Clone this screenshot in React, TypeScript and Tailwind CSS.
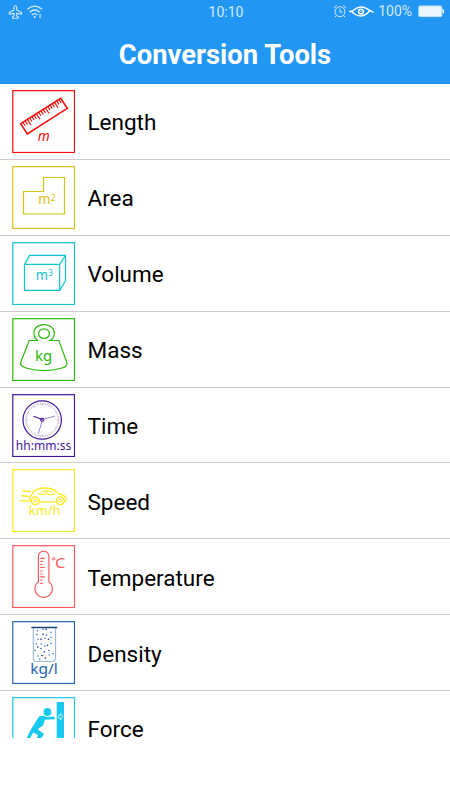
import type { ReactNode } from "react";

interface Tool {
  name: string;
  color: string;
  art: ReactNode;
}

const textProps = {
  fill: "currentColor",
  stroke: "none",
  fontFamily: '"Noto Sans", "Open Sans", sans-serif',
  lengthAdjust: "spacingAndGlyphs",
};

function Ruler() {
  const ticks = Array.from({ length: 17 }, (_, i) => i);
  return (
    <>
      <path d="M8.7 33.7 48.7 8.3 55.3 18.3 15.3 44Z" strokeWidth="1.5" />
      {ticks.map((i) => {
        const x = 10.9 + i * 2.25;
        const y = 32.3 - i * 1.43;
        const len = i % 4 === 2 ? 6.5 : 4.2;
        return <path key={i} d={`M${x} ${y}l${len * 0.55} ${len * 0.83}`} strokeWidth="1.1" />;
      })}
      <text {...textProps} x="25.8" y="51" fontSize="13.5" fontStyle="italic" textLength="12">
        m
      </text>
    </>
  );
}

function Clock() {
  const marks = Array.from({ length: 60 }, (_, i) => (i * Math.PI) / 30);
  return (
    <>
      <circle cx="30.2" cy="26" r="19.2" strokeWidth="1.2" />
      {marks.map((a, i) => {
        const inner = i % 5 === 0 ? 14.5 : 15.5;
        return (
          <path
            key={i}
            d={`M${30.2 + Math.cos(a) * inner} ${26 + Math.sin(a) * inner}L${30.2 + Math.cos(a) * 17} ${26 + Math.sin(a) * 17}`}
            strokeWidth="0.5"
            opacity="0.7"
          />
        );
      })}
      <path d="M30.2 25.5 21.5 22.3" strokeWidth="1.2" />
      <path d="M30.2 25.5 43 22M31 24 26.3 39.7" strokeWidth="0.7" opacity="0.75" />
      <circle cx="30.2" cy="25.8" r="1.7" />
      <text {...textProps} x="3.8" y="56.4" fontSize="12.5" textLength="55.4">
        hh:mm:ss
      </text>
    </>
  );
}

const bubbles = [
  [31, 8.3], [34, 8.3], [25.3, 9.7], [39, 11.3], [31, 13.3], [34.5, 14.2],
  [25, 13.5], [29, 18.2], [26, 18.2], [33, 17.3], [36.5, 18.3], [24.3, 23],
  [29.2, 23], [35.5, 24.3], [39, 22.5], [29, 27.5], [25.8, 26], [33, 25],
  [23, 29.5], [32.3, 30.8], [36.8, 29.5], [41, 32.8], [30, 34.5], [26.2, 35],
  [37.3, 34], [33.3, 37], [27.7, 38], [39, 16.5],
];

const tools: Tool[] = [
  { name: "Length", color: "text-[#f90808]", art: <Ruler /> },
  {
    name: "Area",
    color: "text-[#d6c218]",
    art: (
      <>
        <path d="M11.5 25.5H31.5V11.5H52.5V48H11.5Z" strokeWidth="1.2" />
        <text {...textProps} x="26.2" y="38.3" fontSize="13.5" textLength="12.2">
          m
        </text>
        <text {...textProps} x="38.8" y="34.7" fontSize="8.5">
          2
        </text>
      </>
    ),
  },
  {
    name: "Volume",
    color: "text-[#0fc2cf]",
    art: (
      <>
        <path d="M12.5 22.4H47.7V48.4H12.5ZM12.5 22.4 17.5 13.4H53.5L47.7 22.4M53.5 13.4V38.7L47.7 48.4" strokeWidth="1.2" />
        <text {...textProps} x="23.8" y="38.2" fontSize="13.5" textLength="12.2">
          m
        </text>
        <text {...textProps} x="36" y="34.2" fontSize="8.5">
          3
        </text>
      </>
    ),
  },
  {
    name: "Mass",
    color: "text-[#2bb907]",
    art: (
      <>
        <ellipse cx="32" cy="15.6" rx="5.5" ry="4.7" strokeWidth="1.2" />
        <path d="M26 22.5C20.5 19 20.4 10.7 26.5 7.9 35 4 43 9.5 42.3 16.3 42 19.2 40 21.3 38 22.5H46.8L54.7 44C56 47 53.5 49 50 50 39 53.2 25 53.2 14 50 9.5 48.7 7.7 46.5 9 43.5L17.2 22.5H26" strokeWidth="1.2" />
        <text {...textProps} x="23" y="43" fontSize="14.5" textLength="17.2">
          kg
        </text>
      </>
    ),
  },
  { name: "Time", color: "text-[#42149b]", art: <Clock /> },
  {
    name: "Speed",
    color: "text-[#f8ea20]",
    art: (
      <>
        <path d="M18.8 32.6C17.2 31.6 17.2 27.6 19.3 26 20.5 23.4 22.3 21.4 25 20.3 30 18.7 36 18.7 40.5 20.3 43.3 21.7 45.5 23.6 47.2 25 51.5 25.6 53.5 26.6 54 29.5 54.2 31 54 32.2 52.8 32.6" strokeWidth="1.3" />
        <path d="M27.6 33H44" strokeWidth="1.3" />
        <path d="M26.5 25.4Q28.3 21.9 33.3 21.6V25.4ZM35 21.6Q40 21.7 43 25.4H35Z" strokeWidth="0.9" />
        <circle cx="23.2" cy="31.8" r="3.8" strokeWidth="1.4" />
        <circle cx="23.2" cy="31.8" r="1.5" />
        <circle cx="48.3" cy="31.8" r="3.8" strokeWidth="1.4" />
        <circle cx="48.3" cy="31.8" r="1.5" />
        <path d="M10.5 21.7 18.3 22.8M9 26.7 16.5 27.3M7.5 31.9 16.5 32" strokeWidth="1.4" />
        <text {...textProps} x="16.8" y="46.3" fontSize="13" textLength="31.6">
          km/h
        </text>
      </>
    ),
  },
  {
    name: "Temperature",
    color: "text-[#fb5860]",
    art: (
      <>
        <path d="M26.4 36.8V11.4A5.2 5.2 0 0 1 36.9 11.4V36.8A8.7 8.7 0 1 1 26.4 36.8Z" strokeWidth="1.2" />
        <path d="M28.3 13.3h4.5M28.3 16.4h2.5M28.3 19.5h2.5M28.3 22.5h4.5M28.3 26h2.5M28.3 29h2.5M28.3 31.8h4.5M28.3 35h2.5M28.3 38.3h2.5" strokeWidth="1.2" />
        <circle cx="41.7" cy="13.8" r="1.2" />
        <text {...textProps} x="43.1" y="22.8" fontSize="15" textLength="10.4">
          C
        </text>
      </>
    ),
  },
  {
    name: "Density",
    color: "text-[#2465b0]",
    art: (
      <>
        <path d="M21.3 7V37.5Q21.3 40.4 24.3 40.4H40.7Q43.6 40.4 43.6 37.5V7" opacity="0.5" />
        <path d="M19.3 6.5H45.2" stroke="#154474" strokeWidth="1.5" />
        {bubbles.map(([x, y], i) => (
          <circle key={i} cx={x} cy={y} r="0.8" fill={i % 3 === 1 ? "#111c80" : "#3275be"} stroke="none" />
        ))}
        <text {...textProps} x="18.3" y="53" fontSize="15" textLength="27.5">
          kg/l
        </text>
      </>
    ),
  },
  {
    name: "Force",
    color: "text-[#18c9ee]",
    art: (
      <>
        <path d="M44.7 5H52V63H44.7Z" fill="currentColor" stroke="none" />
        <path d="M46.3 18.3h2v-2l2.6 3.4-2.6 3.3v-2h-2Z" stroke="#fff" strokeWidth="0.7" />
        <circle cx="35.4" cy="15" r="3.9" fill="currentColor" stroke="none" />
        <path d="M27 19.5 31 18.6 34 19.8 42.8 19.8V22.2L33 22.8 31 28.5 25.5 32.2 32 37 27.8 44H23.8L26 38 21 35.5 17 44H13L20 30.5Z" fill="currentColor" stroke="none" />
      </>
    ),
  },
];

function StatusBar() {
  return (
    <div className="flex h-6 items-center justify-between pl-2 pr-[6px] text-[#d3eafe]">
      <div className="flex w-[150px] items-center gap-[4px]">
        <svg width="15" height="15" viewBox="0 0 15 15" fill="none" stroke="currentColor" strokeWidth="1.1" strokeLinejoin="round">
          <path d="M7.3 .8Q6 .8 6 2.6V5L1.2 7.6V9.2L6 8.4V10.9L4.6 12V13.2H10.2V12L8.7 10.9V8.4L13.5 9.2V7.6L8.7 5V2.6Q8.7 .8 7.3 .8Z" />
        </svg>
        <svg width="17" height="15" viewBox="0 0 17 15" fill="none" stroke="currentColor" strokeWidth="1.3">
          <path d="M.4 4.2Q7.7-1.8 15 4.2M2.7 7.2Q7.7 2.8 12.7 7.2M4.9 10Q7.7 7.3 10.5 10" />
          <circle cx="7.7" cy="12" r="1.1" fill="currentColor" stroke="none" />
          <path d="M12.2 9.8H14.2M12.2 12.2H14.2" />
        </svg>
      </div>
      <span className="text-[14px] leading-none">10:10</span>
      <div className="flex w-[150px] items-center justify-end">
        <svg width="14" height="14" viewBox="0 0 14 14" fill="none" stroke="currentColor" strokeWidth="1">
          <circle cx="7" cy="6.7" r="5" />
          <path d="M7 3.5V7H9.7M1.2 3.3Q1.6 1.1 3.8 .7M10.2 .7Q12.4 1.1 12.8 3.3M3.2 10.7 2 12.2M10.8 10.7 12 12.2" />
        </svg>
        <svg className="ml-[2px]" width="25" height="14" viewBox="0 0 25 14" fill="none" stroke="#fff" strokeWidth="1.4">
          <path d="M0 6.3Q2.5 6.8 4 5.6 12-1.7 20.5 5.4L24.5 7.3M2.5 6.6Q12 15.8 21 5.8" />
          <circle cx="12" cy="6.6" r="2.4" />
          <circle cx="12" cy="6.6" r=".6" fill="#fff" stroke="none" />
        </svg>
        <span className="-mt-[2px] ml-[4px] text-[14px] leading-none">100%</span>
        <svg className="-mt-px ml-[6px]" width="26" height="13" viewBox="0 0 26 13">
          <rect x=".8" y="1" width="23" height="10.6" rx="1" fill="#ecf6ff" stroke="#bfe0fc" />
          <path d="M24.4 4.3H26V8.3H24.4Z" fill="#e2f1ff" />
        </svg>
      </div>
    </div>
  );
}

export default function App() {
  return (
    <div className="h-[800px] w-[450px] overflow-hidden bg-white font-[Roboto,sans-serif]">
      <header className="h-[84px] border-b border-[#168ae9] bg-[#2196f3]">
        <StatusBar />
        <h1 className="pt-[11px] text-center text-[27.4px] font-bold leading-10 text-white">Conversion Tools</h1>
      </header>
      <ul>
        {tools.map((tool) => (
          <li key={tool.name} className="group flex h-[75.88px] border-b border-[#cccccc] pl-3 pt-[6.1px] last:border-b-0">
            {/* the last row only shows the upper part of its icon */}
            <div className="h-[63px] shrink-0 overflow-hidden group-last:h-[40.5px]">
              <svg
                className={tool.color}
                width="63"
                height="63"
                viewBox="0 0 63 63"
                fill="none"
                stroke="currentColor"
                strokeWidth="1"
              >
                <rect x="0.8" y="0.7" width="61.7" height="61.8" strokeWidth="1.2" />
                {tool.art}
              </svg>
            </div>
            <span className="ml-[12.5px] pt-[17.4px] text-[22.5px] leading-[30px] text-black">{tool.name}</span>
          </li>
        ))}
      </ul>
    </div>
  );
}
